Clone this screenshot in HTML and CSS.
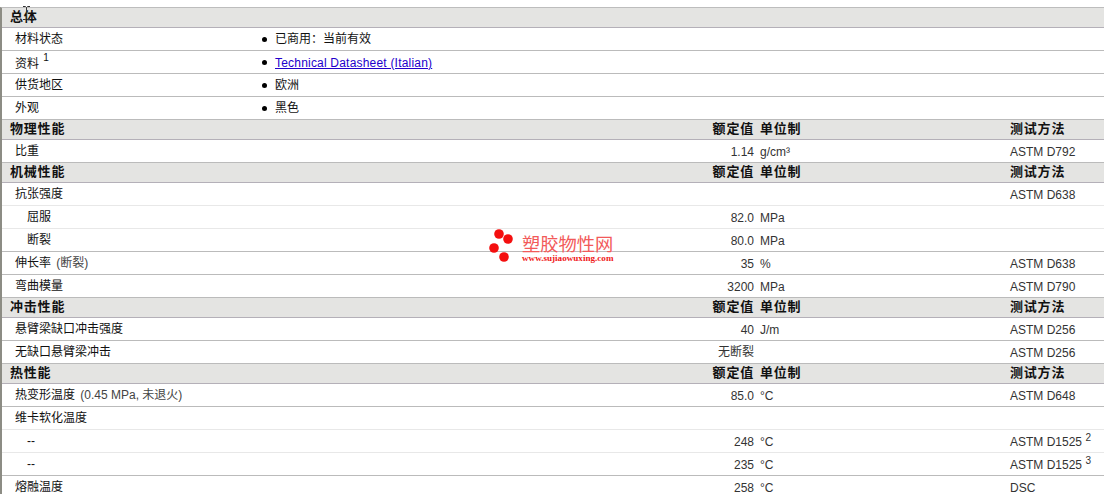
FILE: index.html
```html
<!DOCTYPE html>
<html lang="zh">
<head>
<meta charset="utf-8">
<title>物性表</title>
<link rel="stylesheet" href="styles.css">
</head>
<body>
<main class="sheet">
  <div class="row head"><span class="name">总体</span></div>
  <div class="row"><span class="name">材料状态</span><span class="wide"><i class="dot"></i>已商用：当前有效</span></div>
  <div class="row"><span class="name low">资料 <sup>1</sup></span><span class="wide"><i class="dot"></i><a href="#">Technical Datasheet (Italian)</a></span></div>
  <div class="row"><span class="name">供货地区</span><span class="wide"><i class="dot"></i>欧洲</span></div>
  <div class="row"><span class="name">外观</span><span class="wide"><i class="dot"></i>黑色</span></div>

  <div class="row head"><span class="name">物理性能</span><span class="val">额定值</span><span class="unit">单位制</span><span class="test">测试方法</span></div>
  <div class="row"><span class="name">比重</span><span class="val">1.14</span><span class="unit">g/cm³</span><span class="test">ASTM D792</span></div>

  <div class="row head"><span class="name">机械性能</span><span class="val">额定值</span><span class="unit">单位制</span><span class="test">测试方法</span></div>
  <div class="row sub-next"><span class="name">抗张强度</span><span class="val"></span><span class="unit"></span><span class="test">ASTM D638</span></div>
  <div class="row sub-next"><span class="name sub">屈服</span><span class="val">82.0</span><span class="unit">MPa</span><span class="test"></span></div>
  <div class="row"><span class="name sub">断裂</span><span class="val">80.0</span><span class="unit">MPa</span><span class="test"></span></div>
  <div class="row"><span class="name">伸长率 <em>(断裂)</em></span><span class="val">35</span><span class="unit">%</span><span class="test">ASTM D638</span></div>
  <div class="row"><span class="name">弯曲模量</span><span class="val">3200</span><span class="unit">MPa</span><span class="test">ASTM D790</span></div>

  <div class="row head"><span class="name">冲击性能</span><span class="val">额定值</span><span class="unit">单位制</span><span class="test">测试方法</span></div>
  <div class="row"><span class="name">悬臂梁缺口冲击强度</span><span class="val">40</span><span class="unit">J/m</span><span class="test">ASTM D256</span></div>
  <div class="row"><span class="name">无缺口悬臂梁冲击</span><span class="val cjk">无断裂</span><span class="unit"></span><span class="test">ASTM D256</span></div>

  <div class="row head"><span class="name">热性能</span><span class="val">额定值</span><span class="unit">单位制</span><span class="test">测试方法</span></div>
  <div class="row"><span class="name">热变形温度 <em>(0.45 MPa, 未退火)</em></span><span class="val">85.0</span><span class="unit">°C</span><span class="test">ASTM D648</span></div>
  <div class="row sub-next"><span class="name">维卡软化温度</span></div>
  <div class="row sub-next"><span class="name sub">--</span><span class="val">248</span><span class="unit">°C</span><span class="test">ASTM D1525 <sup>2</sup></span></div>
  <div class="row"><span class="name sub">--</span><span class="val">235</span><span class="unit">°C</span><span class="test">ASTM D1525 <sup>3</sup></span></div>
  <div class="row"><span class="name">熔融温度</span><span class="val">258</span><span class="unit">°C</span><span class="test">DSC</span></div>
</main>

<svg class="cursor" width="9" height="14" viewBox="0 0 9 14" aria-hidden="true"><path d="M1 .5h2.500l1 1 1-1H8M4.500 1.500v11M1 13.500h2.500l1-1 1 1H8" fill="none" stroke="#333" stroke-width="1"/></svg>

<div class="logo">
  <svg class="logo-dots" width="28" height="34" viewBox="0 0 28 34" aria-hidden="true">
    <circle cx="10" cy="5" r="4.800"/><circle cx="19" cy="10" r="4.800"/><circle cx="5" cy="19" r="4.800"/><circle cx="15" cy="28" r="4.800"/>
  </svg>
  <div class="logo-text">
    <div class="logo-cn">塑胶物性网</div>
    <div class="logo-url">www.sujiaowuxing.com</div>
  </div>
</div>
</body>
</html>
```
FILE: styles.css
```css
html, body { margin: 0; padding: 0; background: #fff; overflow: hidden; }
body {
  height: 494px;
  position: relative;
  font: 12px/1 "Liberation Sans", "Noto Sans CJK SC", sans-serif;
  color: #111;
}
.sheet {
  margin: 7px 0 0;
  border-left: 2px solid #8c8c84;
  border-top: 1px solid #bdbdbd;
}
.row {
  display: grid;
  grid-template-columns: 640px 112px 256px 1fr;
  height: 22px;
  border-bottom: 1px solid #bbb;
  align-items: center;
}
.row.sub-next { border-bottom-color: #e8e8e8; }
.row.head {
  height: 19px;
  background: #e4e4e2;
  font-weight: 700;
  font-size: 13px;
  letter-spacing: .8px;
  border-bottom-color: #b4b0b8;
}
.name { grid-column: 1; grid-row: 1; padding-left: 13px; white-space: nowrap; }
.name.low { padding-top: 4px; }
.head .name { padding-left: 8px; padding-bottom: 2px; }
.name.sub { padding-left: 25px; }
em { font-style: normal; color: #444; margin-left: 2px; }
.val, .unit, .test { padding-top: 2px; white-space: nowrap; color: #333; }
.val { text-align: right; }
.val.cjk { padding-top: 0; }
.unit { padding-left: 6px; }
.head .val, .head .unit, .head .test { padding-top: 0; padding-bottom: 2px; color: #111; }
.wide { grid-column: 1 / -1; grid-row: 1; margin-left: 260px; display: flex; align-items: center; }
.dot { width: 5px; height: 5px; border-radius: 50%; background: #000; margin-right: 8px; }
a { color: #2200cc; text-decoration: underline; letter-spacing: .2px; padding-top: 2px; }
sup { font-size: 10px; line-height: 0; vertical-align: 5px; }
.low sup { vertical-align: 7px; margin-left: 1px; }
.cursor { position: absolute; left: 22px; top: 6px; }
.logo { position: absolute; left: 489px; top: 229px; display: flex; gap: 5px; }
.logo-dots { fill: #f40f0f; flex: none; }
.logo-cn { font: 18.300px/19px "Noto Sans CJK SC", sans-serif; margin-top: 5px; color: #f25a5a; }
.logo-url { font: 700 9.100px/10px "Liberation Serif", serif; color: #f01818; }
```
